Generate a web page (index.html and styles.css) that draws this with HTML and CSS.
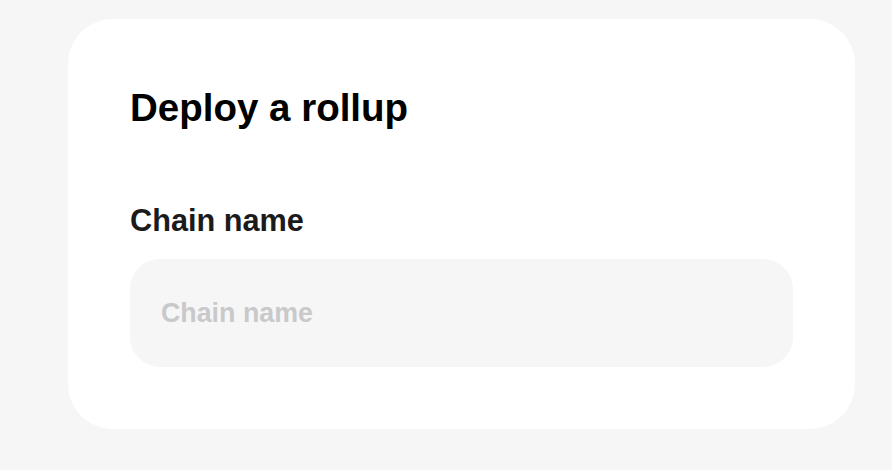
FILE: index.html
```html
<!DOCTYPE html>
<html lang="en">
<head>
<meta charset="utf-8">
<title>Deploy a rollup</title>
<link rel="stylesheet" href="styles.css">
</head>
<body>
<main class="page">
  <section class="card">
    <h1 class="title">Deploy a rollup</h1>
    <label class="label" for="chain">Chain name</label>
    <input class="input" id="chain" type="text" placeholder="Chain name">
  </section>
</main>
</body>
</html>
```

FILE: styles.css
```css
html, body {
  margin: 0;
  padding: 0;
  background: #f6f6f6;
  font-family: "Liberation Sans", Arial, Helvetica, sans-serif;
}
.page {
  padding: 19px 0 0 68px;
}
.card {
  box-sizing: border-box;
  width: 787px;
  height: 410px;
  background: #ffffff;
  border-radius: 45px;
  padding: 67px 62px 62px 62px;
  display: flex;
  flex-direction: column;
}
.title {
  margin: 0;
  font-size: 38.5px;
  line-height: 44px;
  font-weight: 700;
  color: #000000;
}
.label {
  margin-top: 73px;
  font-size: 30.7px;
  line-height: 36px;
  font-weight: 700;
  color: #1b1b1b;
}
.input {
  box-sizing: border-box;
  margin-top: 20px;
  width: 663px;
  height: 108px;
  border: none;
  outline: none;
  border-radius: 30px;
  background: #f6f6f6;
  padding: 0 31px;
  font-family: "Liberation Sans", Arial, Helvetica, sans-serif;
  font-size: 26.8px;
  line-height: 31px;
  font-weight: 700;
  color: #1b1b1b;
}
.input::placeholder {
  color: #c9c9cb;
  opacity: 1;
}
```
